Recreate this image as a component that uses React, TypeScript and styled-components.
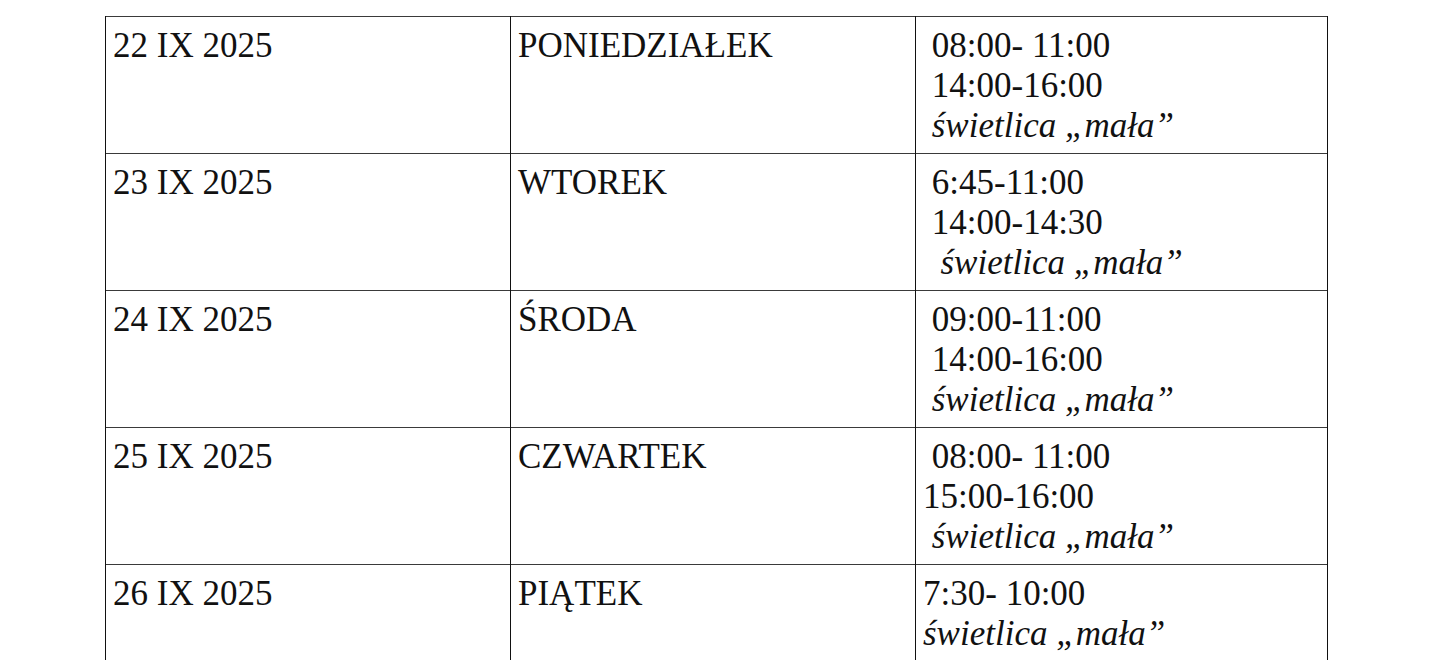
import styled, { createGlobalStyle } from "styled-components";

const GlobalStyle = createGlobalStyle`
  html, body {
    margin: 0;
    padding: 0;
    background: #ffffff;
  }
`;

const Page = styled.div`
  padding: 16px 0 0 105px;
  font-family: "Liberation Serif", "Times New Roman", serif;
  color: #111;
`;

const Table = styled.table`
  border-collapse: collapse;
  table-layout: fixed;
  width: 1222px;
`;

const Row = styled.tr`
  border-top: 1px solid #3a3a3a;
  border-bottom: 1px solid #3a3a3a;
`;

const Cell = styled.td<{ $width: number }>`
  box-sizing: border-box;
  width: ${(p) => p.$width}px;
  border-left: 1px solid #111;
  border-right: 1px solid #111;
  padding: 9px 0 7px 7px;
  vertical-align: top;
  font-size: 35px;
  line-height: 40px;
`;

const Line = styled.div<{ $italic?: boolean }>`
  white-space: pre;
  font-style: ${(p) => (p.$italic ? "italic" : "normal")};
`;

type Day = {
  date: string;
  name: string;
  hours: { text: string; italic?: boolean }[];
};

const days: Day[] = [
  {
    date: "22 IX 2025",
    name: "PONIEDZIAŁEK",
    hours: [
      { text: " 08:00- 11:00" },
      { text: " 14:00-16:00" },
      { text: " świetlica „mała”", italic: true },
    ],
  },
  {
    date: "23 IX 2025",
    name: "WTOREK",
    hours: [
      { text: " 6:45-11:00" },
      { text: " 14:00-14:30" },
      { text: "  świetlica „mała”", italic: true },
    ],
  },
  {
    date: "24 IX 2025",
    name: "ŚRODA",
    hours: [
      { text: " 09:00-11:00" },
      { text: " 14:00-16:00" },
      { text: " świetlica „mała”", italic: true },
    ],
  },
  {
    date: "25 IX 2025",
    name: "CZWARTEK",
    hours: [
      { text: " 08:00- 11:00" },
      { text: "15:00-16:00" },
      { text: " świetlica „mała”", italic: true },
    ],
  },
  {
    date: "26 IX 2025",
    name: "PIĄTEK",
    hours: [
      { text: "7:30- 10:00" },
      { text: "świetlica „mała”", italic: true },
    ],
  },
];

export default function App() {
  return (
    <>
      <GlobalStyle />
      <Page>
        <Table>
          <tbody>
            {days.map((day) => (
              <Row key={day.date}>
                <Cell $width={405}>
                  <Line>{day.date}</Line>
                </Cell>
                <Cell $width={405}>
                  <Line>{day.name}</Line>
                </Cell>
                <Cell $width={412}>
                  {day.hours.map((h, i) => (
                    <Line key={i} $italic={h.italic}>
                      {h.text}
                    </Line>
                  ))}
                </Cell>
              </Row>
            ))}
          </tbody>
        </Table>
      </Page>
    </>
  );
}
